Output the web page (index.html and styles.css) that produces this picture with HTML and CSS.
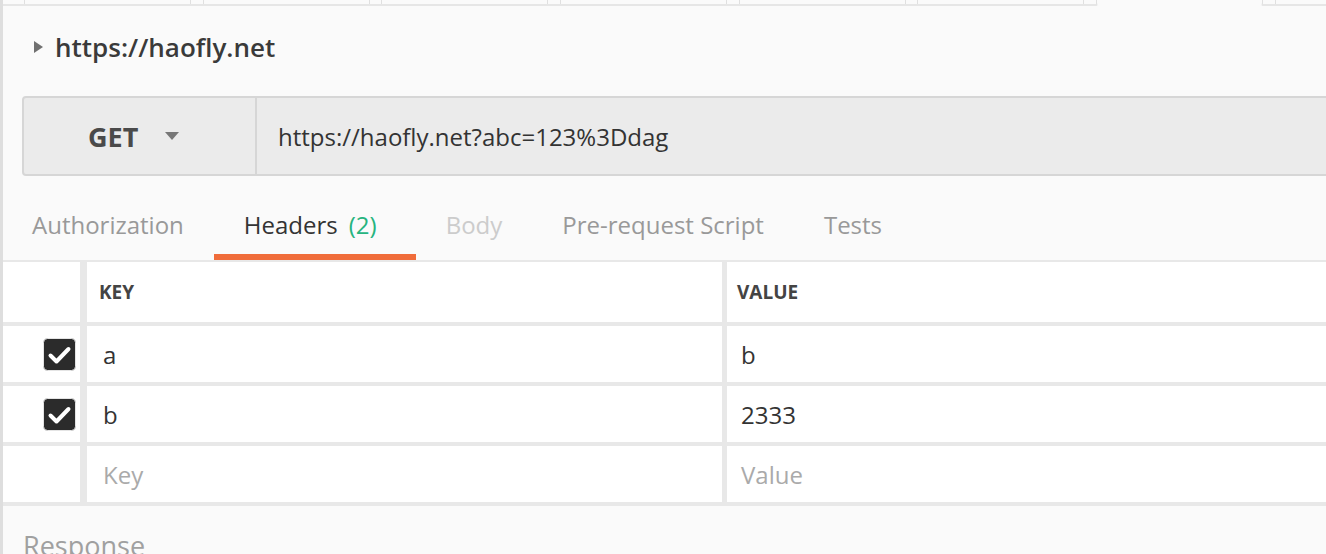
FILE: index.html
```html
<!DOCTYPE html>
<html lang="en">
<head>
<meta charset="utf-8">
<title>Request</title>
<link rel="stylesheet" href="styles.css">
</head>
<body>
<div class="app">
  <div class="tabstrip">
    <div class="wtab"></div>
    <div class="wtab"></div>
    <div class="wtab"></div>
    <div class="wtab"></div>
    <div class="wtab"></div>
    <div class="wtab"></div>
    <div class="wtab active"></div>
    <div class="wtab"></div>
  </div>

  <div class="title">
    <span class="caret"></span>
    <span class="title-text">https://haofly.net</span>
  </div>

  <div class="urlbar">
    <div class="method">
      <span class="method-name">GET</span>
      <span class="dropdown"></span>
    </div>
    <div class="url">https://haofly.net?abc=123%3Ddag</div>
  </div>

  <nav class="reqtabs">
    <span class="rtab">Authorization</span>
    <span class="rtab current">Headers<span class="count">(2)</span></span>
    <span class="rtab disabled">Body</span>
    <span class="rtab">Pre-request Script</span>
    <span class="rtab">Tests</span>
  </nav>

  <div class="kv">
    <div class="kv-row kv-head">
      <div class="cell check"></div>
      <div class="cell key">KEY</div>
      <div class="cell val">VALUE</div>
    </div>
    <div class="kv-row">
      <div class="cell check">
        <svg class="box" width="33" height="33" viewBox="0 0 33 33"><rect x="0.5" y="0.5" width="32" height="32" rx="4" fill="#2b2b2b" stroke="#e4e4e4"/><polyline points="7.5,17.5 13.5,23.5 25.5,11" fill="none" stroke="#ffffff" stroke-width="4" stroke-linecap="round" stroke-linejoin="round"/></svg>
      </div>
      <div class="cell key">a</div>
      <div class="cell val">b</div>
    </div>
    <div class="kv-row">
      <div class="cell check">
        <svg class="box" width="33" height="33" viewBox="0 0 33 33"><rect x="0.5" y="0.5" width="32" height="32" rx="4" fill="#2b2b2b" stroke="#e4e4e4"/><polyline points="7.5,17.5 13.5,23.5 25.5,11" fill="none" stroke="#ffffff" stroke-width="4" stroke-linecap="round" stroke-linejoin="round"/></svg>
      </div>
      <div class="cell key">b</div>
      <div class="cell val">2333</div>
    </div>
    <div class="kv-row">
      <div class="cell check"></div>
      <div class="cell key placeholder">Key</div>
      <div class="cell val placeholder">Value</div>
    </div>
  </div>

  <div class="response">Response</div>
</div>
</body>
</html>
```

FILE: styles.css
```css
* { box-sizing: border-box; }

html, body {
  margin: 0;
  padding: 0;
  background: #fafafa;
}

body {
  font-family: "Open Sans", "Liberation Sans", sans-serif;
  color: #333333;
}

.app {
  height: 554px;
  overflow: hidden;
  border-left: 3px solid #dedede;
}

/* window tabs (bottom edge only visible) */
.tabstrip {
  display: flex;
  align-items: flex-start;
  gap: 11.7px;
  height: 6px;
  padding-left: 21px;
  border-bottom: 2px solid #e6e6e6;
  white-space: nowrap;
}

.wtab {
  flex: 0 0 167px;
  height: 4px;
  border-left: 1px solid #e0e0e0;
  border-right: 1px solid #e0e0e0;
}

.wtab.active {
  height: 6px;
  margin-bottom: -2px;
  background: #fafafa;
  border-bottom: 1px solid #fafafa;
  border-radius: 0 0 3px 3px;
}

/* collection title */
.title {
  display: flex;
  align-items: center;
  padding: 25px 0 0 31px;
  height: 57px;
}

.caret {
  width: 0;
  height: 0;
  border-left: 9px solid #707070;
  border-top: 6.5px solid transparent;
  border-bottom: 6.5px solid transparent;
  margin-right: 12px;
}

.title-text {
  font-size: 26px;
  line-height: 32px;
  font-weight: 600;
  color: #3a3a3a;
}

/* url bar */
.urlbar {
  display: flex;
  margin: 33px -10px 0 19px;
  height: 80px;
  background: #ebebeb;
  border: 2px solid #d6d6d6;
  border-radius: 4px;
}

.method {
  flex: 0 0 233px;
  display: flex;
  align-items: center;
  padding-left: 64px;
  border-right: 2px solid #d6d6d6;
}

.method-name {
  font-size: 27px;
  font-weight: 700;
  color: #4a4a4a;
  line-height: 32px;
  margin-top: 2px;
}

.dropdown {
  width: 0;
  height: 0;
  margin-left: 27px;
  border-top: 8px solid #777777;
  border-left: 7.5px solid transparent;
  border-right: 7.5px solid transparent;
}

.url {
  display: flex;
  align-items: center;
  padding-left: 21px;
  font-size: 24px;
  color: #333333;
}

/* request tabs */
.reqtabs {
  display: flex;
  margin-top: 33px;
  padding-left: 0;
}

.rtab {
  padding: 0 30px 13px;
  font-size: 24px;
  line-height: 32px;
  color: #999999;
  border-bottom: 6px solid transparent;
  white-space: nowrap;
}

.rtab:first-child {
  padding-left: 29px;
}

.rtab.current {
  color: #333333;
  border-bottom-color: #f06c3a;
  padding-right: 39px;
}

.rtab.disabled {
  color: #cccccc;
}

.count {
  color: #26b47f;
  margin-left: 11px;
}

/* key/value table */
.kv {
  border-top: 2px solid #e8e8e8;
}

.kv-row {
  display: grid;
  grid-template-columns: 77px 642px 1fr;
  height: 60px;
  border-bottom: 4px solid #e8e8e8;
}

.kv-head {
  height: 64px;
}

.cell {
  display: flex;
  align-items: center;
  background: #ffffff;
  font-size: 24px;
  color: #333333;
}

.cell.check {
  justify-content: flex-end;
  padding-right: 4px;
}

.cell.key {
  border-left: 7px solid #e8e8e8;
  padding-left: 16px;
}

.cell.val {
  border-left: 5px solid #e8e8e8;
  padding-left: 14px;
}

.kv-head .cell {
  font-size: 19px;
  font-weight: 700;
  color: #444444;
}

.kv-head .cell.key { padding-left: 12px; }
.kv-head .cell.val { padding-left: 10px; }

.cell.placeholder {
  color: #aaaaaa;
}

.box {
  display: block;
}

/* response */
.response {
  margin-top: 24px;
  padding-left: 20px;
  font-size: 27px;
  line-height: 32px;
  color: #a0a0a0;
}
```
